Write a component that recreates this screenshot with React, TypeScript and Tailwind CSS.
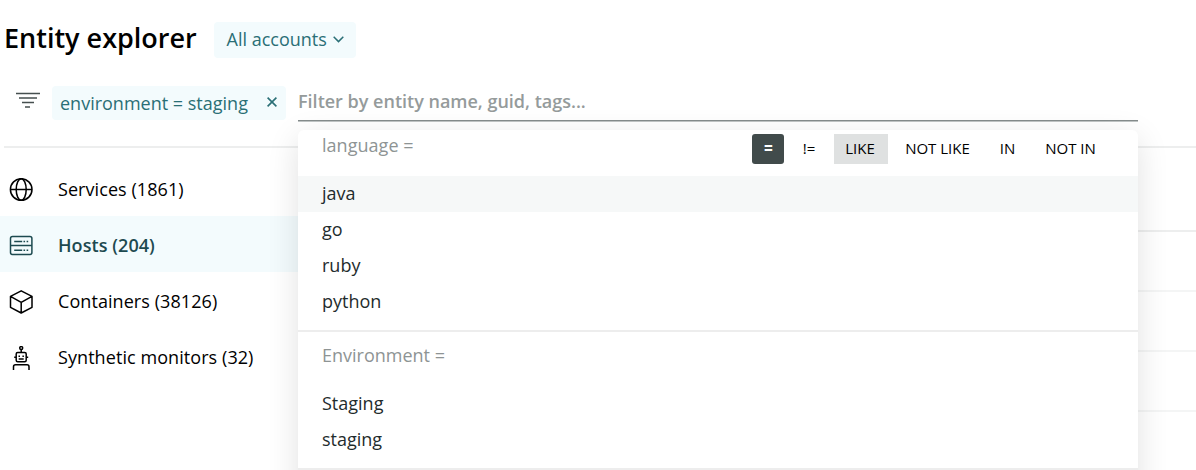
import type { ReactNode } from "react";

const iconProps = {
  width: 24,
  height: 24,
  viewBox: "0 0 24 24",
  fill: "none",
  stroke: "currentColor",
  strokeWidth: 1.5,
  className: "block shrink-0",
} as const;

function GlobeIcon() {
  return (
    <svg {...iconProps}>
      <circle cx="12.2" cy="11.5" r="10.8" />
      <ellipse cx="12.2" cy="11.5" rx="5" ry="10.8" />
      <path d="M1.4 11.5h21.6" />
    </svg>
  );
}

function HostIcon() {
  return (
    <svg {...iconProps}>
      <rect x="1.5" y="2.4" width="21.4" height="18.2" rx="2" />
      <path d="M1.5 11.5h21.4" />
      <path d="M5.200 7.500h8M14.500 7.500h1.600M17.600 7.500h1.600M5.200 16.200h8M14.500 16.200h1.600M17.600 16.200h1.600" />
    </svg>
  );
}

function CubeIcon() {
  return (
    <svg {...iconProps} strokeLinejoin="round">
      <path d="M12.200 .8 23 6.300v11L12.200 23 1.500 17.300V6.300zM1.500 6.300 12.200 12.300 23 6.300M12.200 12.300V23" />
    </svg>
  );
}

function RobotIcon() {
  return (
    <svg {...iconProps}>
      <circle cx="12.2" cy="2.1" r="1.5" />
      <path d="M12.2 3.6v3" />
      <rect x="7.2" y="6.6" width="10" height="9.2" rx="1.5" />
      <path d="M5.2 11.2h2M17.2 11.2h2M9.5 10.3h1.500M13.400 10.300h1.500M9.700 13.100h5" />
      <path d="M4.500 24v-3.200a2 2 0 0 1 2-2h11.500a2 2 0 0 1 2 2V24" />
    </svg>
  );
}

function NavItem({ icon, label, active }: { icon: ReactNode; label: string; active?: boolean }) {
  return (
    <li
      className={
        active
          ? "flex h-14 items-center gap-[25px] bg-[#f3fbfd] pl-[9px] pt-[3px] font-semibold text-[#1d4a50]"
          : "flex h-14 items-center gap-[25px] pl-[9px] pt-[3px] text-black"
      }
    >
      {icon}
      <span className="whitespace-nowrap text-[18px] tracking-[0.07px]">{label}</span>
    </li>
  );
}

function Option({ label, active }: { label: string; active?: boolean }) {
  return (
    <li className={active ? "flex h-9 items-center bg-[#f6f8f8] px-6 pb-[2px]" : "flex h-9 items-center px-6 pb-[2px]"}>{label}</li>
  );
}

export default function App() {
  return (
    <div className="relative h-[470px] w-full overflow-hidden bg-white font-['Open_Sans',sans-serif] text-[18px] text-black">
      <header className="flex h-[78px] items-start gap-[19px] pl-1">
        <h1 className="mt-[18px] w-[191px] whitespace-nowrap text-[27px] font-semibold leading-10">Entity explorer</h1>
        <button className="mt-[22px] flex h-9 w-[142px] items-center rounded bg-[#f3fbfd] pb-px pl-[12.5px] text-[#2a6f76]">
          <span className="whitespace-nowrap">All accounts</span>
          <svg width="11" height="7" viewBox="0 0 11 7" fill="none" stroke="currentColor" strokeWidth="1.5" className="ml-1.5">
            <path d="M.7.8 5.5 5.6 10.3.8" />
          </svg>
        </button>
      </header>

      <div className="flex h-[68px] items-start pl-4">
        <svg width="24" height="16" viewBox="0 0 24 16" stroke="#464f4f" strokeWidth="1.4" className="mt-[14px]">
          <path d="M0 1.5h24M3 6h18M6 10.5h12M9 15h5" />
        </svg>
        <div className="ml-3 mt-2 flex h-[34px] w-[234px] items-center rounded bg-[#f3fbfd] pl-2 text-[#2a6f76]">
          <span className="w-[207px] whitespace-nowrap">environment = staging</span>
          <svg width="10" height="10" viewBox="0 0 10 10" stroke="currentColor" strokeWidth="1.6" className="-mt-0.5">
            <path d="m.6.6 8.8 8.8M9.4.6.6 9.4" />
          </svg>
        </div>
        <div className="ml-3 w-[840px]">
          <input
            className="mt-[9px] block h-[33px] w-full bg-transparent pb-[5px] text-[18px] font-semibold outline-none placeholder:text-[#959b9b]"
            placeholder="Filter by entity name, guid, tags..."
          />
          <div className="h-px bg-[#858c8c]" />
          <div className="h-px bg-[#c0c5c5]" />
        </div>
      </div>

      <div className="ml-1 h-0.5 bg-[#edeeee]" />

      <div className="flex">
        <ul className="w-[298px] pt-3">
          <NavItem icon={<GlobeIcon />} label="Services (1861)" />
          <NavItem icon={<HostIcon />} label="Hosts (204)" active />
          <NavItem icon={<CubeIcon />} label="Containers (38126)" />
          <NavItem icon={<RobotIcon />} label="Synthetic monitors (32)" />
        </ul>
        <div className="flex-1">
          <div className="h-[84px] border-b-2 border-[#edeeee]" />
          <div className="h-[60px] border-b-2 border-[#f4f5f5]" />
          <div className="h-[60px] border-b-2 border-[#f4f5f5]" />
          <div className="h-[60px] border-b-2 border-[#f4f5f5]" />
        </div>
      </div>

      <section className="absolute left-[298px] top-[130px] h-[400px] w-[840px] rounded-md bg-white text-[#1f2c2d] shadow-[0_8px_32px_rgba(0,20,20,0.12)]">
        <div className="flex h-[46px] items-start justify-between pl-6 pr-6">
          <span className="mt-px whitespace-nowrap leading-7 tracking-[0.03px] text-[#8e9494]">language =</span>
          <div className="mt-1 flex h-[30px] text-[15px] text-black">
            <button className="w-8 rounded-[3px] bg-[#414b4b] pb-[2px] pl-px font-extrabold text-white">=</button>
            <button className="w-[50px] pb-[2px]">!=</button>
            <button className="w-[54px] bg-[#dfe1e1] pb-[2px] pr-[2px]">LIKE</button>
            <button className="w-[99px] whitespace-nowrap pb-[2px]">NOT LIKE</button>
            <button className="w-[41px] pb-[2px]">IN</button>
            <button className="w-[86px] whitespace-nowrap pb-[2px] pr-px">NOT IN</button>
          </div>
        </div>
        <ul className="h-[154px]">
          <Option label="java" active />
          <Option label="go" />
          <Option label="ruby" />
          <Option label="python" />
        </ul>
        <div className="h-0.5 bg-[#ededed]" />
        <div className="flex h-[54px] items-start px-6 pt-[9px] leading-7 text-[#8e9494]">Environment =</div>
        <ul className="h-[82px]">
          <Option label="Staging" />
          <Option label="staging" />
        </ul>
        <div className="h-0.5 bg-[#ededed]" />
      </section>
    </div>
  );
}
